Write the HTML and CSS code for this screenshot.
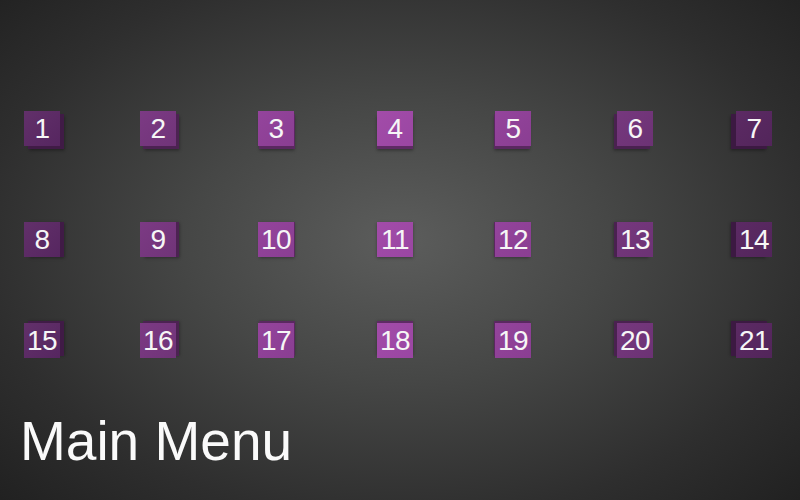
FILE: index.html
```html
<!DOCTYPE html>
<html>
<head>
<meta charset="utf-8">
<link rel="stylesheet" href="styles.css">
</head>
<body>
<div class="stage">
  <div class="grid">
    <div class="row">
      <div class="cube">1</div><div class="cube">2</div><div class="cube">3</div><div class="cube">4</div><div class="cube">5</div><div class="cube">6</div><div class="cube">7</div>
    </div>
    <div class="row">
      <div class="cube">8</div><div class="cube">9</div><div class="cube">10</div><div class="cube">11</div><div class="cube">12</div><div class="cube">13</div><div class="cube">14</div>
    </div>
    <div class="row">
      <div class="cube">15</div><div class="cube">16</div><div class="cube">17</div><div class="cube">18</div><div class="cube">19</div><div class="cube">20</div><div class="cube">21</div>
    </div>
  </div>
  <div class="title">Main Menu</div>
</div>
</body>
</html>
```

FILE: styles.css
```css
html, body {
  margin: 0;
  padding: 0;
  width: 800px;
  height: 500px;
  overflow: hidden;
}

body {
  background: radial-gradient(ellipse 75% 80% at 50% 48%, #5c5d5c 0%, #464746 35%, #2e2e2e 70%, #1d1d1d 100%);
  font-family: "Liberation Sans", Arial, sans-serif;
  color: #f6f6f6;
}

.stage {
  padding: 111px 0 0 24px;
}

.grid {
  display: flex;
  flex-direction: column;
}

.row {
  display: grid;
  grid-template-columns: 116px 118px 119px 118px 122px 119px 36px;
  --dy: 0px;
}

.row:nth-child(1) { --dy: 3px; }
.row:nth-child(2) { --dy: 0px; margin-top: 76px; }
.row:nth-child(3) { --dy: -2px; margin-top: 66px; }

.cube {
  width: 36px;
  height: 35px;
  line-height: 35px;
  text-align: center;
  font-size: 28px;
  letter-spacing: -0.5px;
  background: linear-gradient(135deg, var(--face-hi), var(--face));
  box-shadow: var(--dx) var(--dy) 0 var(--side), calc(var(--dx) * 1.3) calc(var(--dy) * 1.3 + 1px) 3px rgba(0, 0, 0, 0.35);
}

.cube:nth-child(1) { --dx: 4px;  --face: #562660; --face-hi: #62306a; --side: #401b46; }
.cube:nth-child(2) { --dx: 3px;  --face: #703478; --face-hi: #7c3a84; --side: #4c2252; }
.cube:nth-child(3) { --dx: 1px;  --face: #8a3e92; --face-hi: #94449c; --side: #5a2860; }
.cube:nth-child(4) { --dx: 0px;  --face: #9a46a2; --face-hi: #a24ca9; --side: #5e2a64; }
.cube:nth-child(5) { --dx: -1px; --face: #8a3e92; --face-hi: #94449c; --side: #5a2860; }
.cube:nth-child(6) { --dx: -3px; --face: #6c3274; --face-hi: #76387e; --side: #4a2150; }
.cube:nth-child(7) { --dx: -5px; --face: #52255a; --face-hi: #5c2a64; --side: #3c1942; }

.title {
  margin-top: 56px;
  margin-left: -4px;
  font-size: 55px;
  line-height: 55px;
  color: #fafafa;
}
```
